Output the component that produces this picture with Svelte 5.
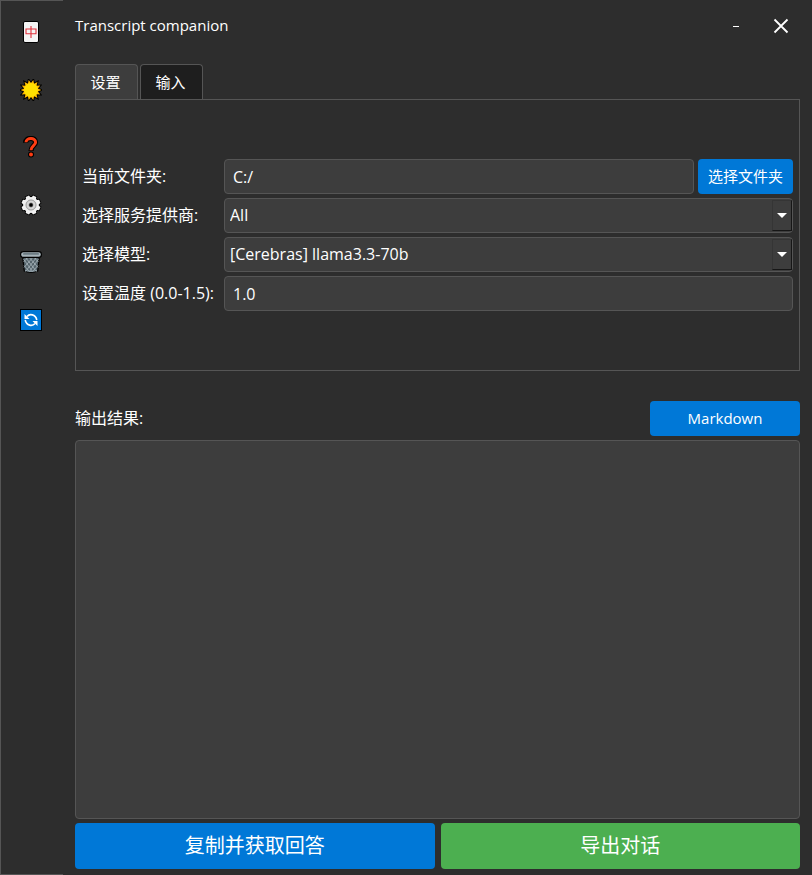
<script>
  const providers = ['All', 'Cerebras'];
  const models = ['[Cerebras] llama3.3-70b'];

  let tab = $state('settings');
  let folder = $state('C:/');
  let provider = $state('All');
  let model = $state(models[0]);
  let temperature = $state('1.0');
  let output = $state('');

  // Fourteen-pointed star outline for the sun icon
  const rays = Array.from({ length: 28 }, (_, i) => {
    const r = i % 2 ? 7 : 10.3;
    const a = ((i + 1) * Math.PI) / 14;
    return `${(11 + r * Math.sin(a)).toFixed(2)},${(11 - r * Math.cos(a)).toFixed(2)}`;
  }).join(' ');
  const teeth = [22.5, 67.5, 112.5, 157.5, 202.5, 247.5, 292.5, 337.5];
</script>

<div class="window">
  <nav class="sidebar" aria-label="工具">
    <div class="tools">
      <button class="tool" aria-label="语言">
        <svg viewBox="0 0 22 22">
          <rect x="3.5" y="0.5" width="15" height="21" rx="1.5" fill="#f4f4f4" stroke="#000" />
          <path d="M6 8h10v4.800H6zM11 5v12" fill="none" stroke="#e0323c" stroke-width="1.1" />
        </svg>
      </button>
      <button class="tool" aria-label="主题">
        <svg viewBox="0 0 22 22">
          <polygon points={rays} fill="#000" stroke="#000" stroke-width="2" />
          <polygon points={rays} fill="#ffb900" />
          <circle cx="11" cy="11" r="7" fill="#ffe000" />
        </svg>
      </button>
      <button class="tool" aria-label="帮助">
        <svg viewBox="0 0 22 22">
          <g fill="none">
            <path d="M5.500 6.800C5.500 1.200 15.500 0.800 15.500 6.200C15.500 9.500 11 9.800 11 15" stroke="#000" stroke-width="5.200" />
            <circle cx="11" cy="18.600" r="3" fill="#000" />
            <path d="M6 6.200C6.200 1.500 15.600 1.200 15.600 6.200C15.600 9.500 11 9.800 11 14.200" stroke="#ff3d13" stroke-width="3" />
            <circle cx="11" cy="18.600" r="2" fill="#ff3d13" />
          </g>
        </svg>
      </button>
      <button class="tool" aria-label="设置">
        <svg viewBox="0 0 22 22">
          <g stroke="#000" stroke-width="2" fill="#000">
            <circle cx="11" cy="11" r="7.800" />
            {#each teeth as t}
              <path d="M8.800 4L9.300 1.700h3.400L13.200 4z" transform="rotate({t} 11 11)" />
            {/each}
          </g>
          <circle cx="11" cy="11" r="7.900" fill="#ececec" />
          {#each teeth as t}
            <path d="M8.400 5L9.200 1.500h3.600L13.600 5z" fill="#f2f2f2" transform="rotate({t} 11 11)" />
          {/each}
          <circle cx="11" cy="11" r="5" fill="#d6d6d6" stroke="#9c9c9c" />
          <circle cx="11" cy="11" r="2.200" fill="#000" stroke="#aaa" stroke-width="0.600" />
        </svg>
      </button>
      <button class="tool" aria-label="清空">
        <svg viewBox="0 0 22 22">
          <path d="M2.500 4.500L4.300 20Q11 22.600 17.700 20L19.500 4.500z" fill="#54636b" stroke="#000" stroke-width="1.200" />
          <path d="M3.500 8l9 12.500M4 4.500l12.500 16M8 5l10 11.500M12.500 5l6 6M4 14.500l5.500 6M18.500 8l-9 12.500M18 4.500l-12.500 16M14 5L4 16.500M9.500 5l-6 6M18 14.500l-5.500 6" stroke="#a9b6bc" stroke-width="0.800" fill="none" />
          <path d="M5 19.500Q11 21.500 17 19.500" stroke="#93a2aa" fill="none" />
          <rect x="0.600" y="0.600" width="20.800" height="5.800" rx="2.700" fill="#a5b2b9" stroke="#000" stroke-width="1.200" />
          <rect x="3" y="2" width="16" height="1.800" rx="0.900" fill="#6c7b83" />
        </svg>
      </button>
      <button class="tool" aria-label="刷新">
        <svg viewBox="0 0 22 22">
          <rect width="22" height="22" fill="#000" />
          <rect x="1" y="1" width="20" height="20" fill="#0078d7" />
          <g fill="none" stroke="#fff" stroke-width="1.600">
            <path d="M7 7.500C9.500 4.500 15.500 5 16.800 11" />
            <path d="M15 14.500C12.500 17.500 6.500 17 5.200 11" />
          </g>
          <path d="M4.500 5v5h5zM17.500 17v-5h-5z" fill="#fff" />
        </svg>
      </button>
    </div>
  </nav>

  <main class="content">
    <header class="titlebar">
      <h1>Transcript companion</h1>
      <button class="caption" aria-label="最小化">
        <svg viewBox="0 0 20 20"><path d="M7 10.500h6" stroke="#fff" /></svg>
      </button>
      <button class="caption" aria-label="关闭">
        <svg viewBox="0 0 20 20"><path d="M3.500 3.500l13 13M16.500 3.500l-13 13" stroke="#fff" stroke-width="1.800" /></svg>
      </button>
    </header>

    <div class="tabs" role="tablist">
      <button role="tab" class="tab" class:active={tab === 'settings'} aria-selected={tab === 'settings'} onclick={() => (tab = 'settings')}>设置</button>
      <button role="tab" class="tab" class:active={tab === 'input'} aria-selected={tab === 'input'} onclick={() => (tab = 'input')}>输入</button>
    </div>

    <section class="panel">
      <div class="form">
        <label for="folder">当前文件夹:</label>
        <div class="pair">
          <input id="folder" class="field" type="text" bind:value={folder} />
          <button class="primary browse">选择文件夹</button>
        </div>

        <label for="provider">选择服务提供商:</label>
        <div class="combo">
          <select id="provider" class="field" bind:value={provider}>
            {#each providers as p}<option>{p}</option>{/each}
          </select>
          <span class="drop"></span>
        </div>

        <label for="model">选择模型:</label>
        <div class="combo">
          <select id="model" class="field" bind:value={model}>
            {#each models as m}<option>{m}</option>{/each}
          </select>
          <span class="drop"></span>
        </div>

        <label for="temperature">设置温度 (0.0-1.5):</label>
        <input id="temperature" class="field" type="text" bind:value={temperature} />
      </div>
    </section>

    <div class="result-head">
      <label for="output">输出结果:</label>
      <button class="primary markdown">Markdown</button>
    </div>
    <textarea id="output" class="output" readonly bind:value={output}></textarea>

    <footer class="actions">
      <button class="primary large">复制并获取回答</button>
      <button class="primary large export">导出对话</button>
    </footer>
  </main>
</div>

<style>
  :global(body) {
    background: #2d2d2d;
  }

  .window {
    display: flex;
    min-height: 100vh;
    box-sizing: border-box;
    background: #2d2d2d;
    color: #fff;
    font-family: 'Open Sans', 'Noto Sans CJK SC', sans-serif;
    font-size: 16px;
    line-height: 24px;
  }

  button,
  input,
  select,
  textarea {
    box-sizing: border-box;
    margin: 0;
    font: inherit;
    color: inherit;
  }

  button {
    padding: 0;
    border: 0;
    background: none;
  }

  svg {
    display: block;
  }

  .sidebar {
    flex: none;
    box-sizing: border-box;
    width: 63px;
    padding: 20px 21px 20px 19px;
    border: 1px solid #555;
    border-right: 0;
  }

  .tools {
    display: flex;
    flex-direction: column;
    justify-content: space-between;
    height: 310px;
  }

  .tool,
  .tool svg {
    width: 22px;
    height: 22px;
  }

  .content {
    flex: 1;
    min-width: 0;
    display: flex;
    flex-direction: column;
    padding: 6px 12px;
  }

  .titlebar {
    display: flex;
    align-items: center;
    gap: 6px;
    height: 40px;
  }

  h1 {
    flex: 1;
    margin: 0;
    padding-bottom: 2px;
    font-size: 15px;
    font-weight: 400;
  }

  .caption {
    width: 39px;
    height: 40px;
    display: grid;
    place-items: center;
  }

  .caption svg {
    width: 20px;
    height: 20px;
  }

  .tabs {
    display: flex;
    gap: 2px;
    margin-top: 18px;
  }

  .tab {
    width: 63px;
    height: 35px;
    padding-right: 2px;
    border: 1px solid #555;
    border-bottom: 0;
    border-radius: 4px 4px 0 0;
    background: #1e1e1e;
    font-size: 15px;
  }

  .tab.active {
    background: #3d3d3d;
  }

  .panel {
    padding: 59px 6px;
    border: 1px solid #555;
  }

  .form {
    display: grid;
    grid-template-columns: 138px 1fr;
    gap: 4px;
    align-items: center;
  }

  .form label,
  .result-head label {
    padding-bottom: 2px;
    white-space: nowrap;
  }

  .pair {
    display: flex;
    gap: 4px;
  }

  .field {
    width: 100%;
    min-width: 0;
    height: 35px;
    padding: 0 8px;
    border: 1px solid #555;
    border-radius: 4px;
    background: #3d3d3d;
    outline: 0;
  }

  select.field {
    appearance: none;
    display: block;
    padding: 0 24px 2px 5px;
  }

  .combo {
    position: relative;
  }

  .drop {
    position: absolute;
    top: 2px;
    right: 1px;
    bottom: 2px;
    width: 20px;
    box-sizing: border-box;
    border: 1px solid #353535;
    border-right-color: #161616;
    border-bottom-color: #161616;
    background: #3d3d3d;
    display: grid;
    place-items: center;
    pointer-events: none;
  }

  .drop::before {
    content: '';
    border: 5px solid transparent;
    border-top-color: #fff;
    border-bottom-width: 0;
  }

  .primary {
    padding-bottom: 2px;
    border-radius: 4px;
    background: #0078d7;
    font-size: 15px;
  }

  .browse {
    flex: none;
    width: 95px;
    height: 35px;
  }

  .result-head {
    display: flex;
    align-items: center;
    justify-content: space-between;
    margin-top: 30px;
  }

  .markdown {
    width: 150px;
    height: 35px;
  }

  .output {
    flex: 1;
    display: block;
    width: 100%;
    min-height: 120px;
    margin: 4px 0;
    padding: 8px;
    border: 1px solid #555;
    border-radius: 4px;
    background: #3d3d3d;
    outline: 0;
    resize: none;
  }

  .actions {
    display: flex;
    gap: 6px;
  }

  .large {
    flex: 1;
    height: 46px;
    padding: 0;
    font-size: 20px;
  }

  .export {
    background: #4caf50;
  }
</style>
